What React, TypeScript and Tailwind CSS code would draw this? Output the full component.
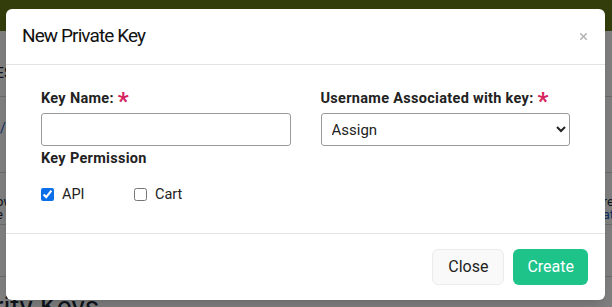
import { X } from "lucide-react";

function Req() {
  return <span className="ml-[4px] text-[24px] leading-none text-[#d6245e] relative top-[2px] font-bold">*</span>;
}

export default function App() {
  return (
    <div className="relative w-[612px] h-[307px] overflow-hidden bg-white font-['Roboto',sans-serif]">
      {/* page behind the modal */}
      <div className="h-[31px] bg-[#667816]" />
      <div className="flex flex-col text-[14px] leading-[14px] text-gray-800">
        <div className="h-[66px] border-b border-gray-300 pt-[35px]">
          <span className="-ml-[4px]">ES</span>
        </div>
        <div className="h-[76px] border-b border-gray-300 pt-[24px]">
          <span className="text-[#2060c0]">/</span>
        </div>
        <div className="h-[52px] border-b border-gray-300 pt-[22px] leading-[13px] text-[13px]">
          <div className="flex justify-between">
            <span className="-ml-[4px]">ow</span>
            <span className="-mr-[2px]">re</span>
          </div>
          <div className="flex justify-between">
            <span className="-ml-[4px]">e</span>
            <span className="text-[#2060c0] -mr-[2px]">at</span>
          </div>
        </div>
        <div className="h-[52px] border-b border-gray-300" />
        <div className="text-[28px] leading-none pt-[16px] -ml-[6px]">rity Keys</div>
      </div>
      <div className="absolute inset-0 bg-black/50" />

      {/* modal */}
      <div className="absolute left-[6px] top-[9px] w-[599px] h-[291px] bg-white rounded-[6px] shadow-lg flex flex-col">
        <div className="h-[56px] border-b border-[#e3e3e3] flex items-center justify-between pl-[16px] pr-[16px]">
          <h2 className="text-[19px] text-[#111] tracking-[-0.9px]">New Private Key</h2>
          <X className="w-[11px] h-[11px] text-[#b5b5b5]" strokeWidth={3.5} />
        </div>
        <div className="h-[169px] border-b border-[#e3e3e3] px-[35px] pt-[24px]">
          <div className="grid grid-cols-2 gap-x-[30px]">
            <div>
              <label className="flex items-center h-[20px] text-[14.5px] tracking-[0.3px] font-bold text-[#222]">
                Key Name:<Req />
              </label>
              <input className="mt-[4px] w-full h-[33px] border border-[#9a9a9a] rounded-[3px] px-2 text-[15px]" />
            </div>
            <div>
              <label className="flex items-center h-[20px] text-[14.5px] tracking-[0.3px] font-bold text-[#222]">
                Username Associated with key:<Req />
              </label>
              <select className="mt-[4px] w-full h-[33px] border border-[#9a9a9a] rounded-[3px] pl-[6px] pr-[8px] text-[15px] text-[#222] bg-white">
                <option>Assign</option>
              </select>
            </div>
          </div>
          <div className="mt-[2px] text-[14.5px] tracking-[0.3px] font-bold text-[#222]">Key Permission</div>
          <div className="mt-[14px] flex items-center text-[14.5px] text-[#222]">
            <label className="flex items-center gap-[8px] w-[93px]">
              <input type="checkbox" defaultChecked className="w-[13px] h-[13px] accent-[#0a6fe8]" />
              API
            </label>
            <label className="flex items-center gap-[8px]">
              <input type="checkbox" className="w-[13px] h-[13px]" />
              Cart
            </label>
          </div>
        </div>
        <div className="flex-1 flex items-center justify-end gap-[9px] pr-[17px]">
          <button className="h-[36px] px-[15px] rounded-[6px] border border-[#ececec] bg-[#f9f9f9] text-[16px] text-[#222]">
            Close
          </button>
          <button className="h-[36px] px-[14px] rounded-[6px] bg-[#1ec38a] text-[16px] text-white">
            Create
          </button>
        </div>
      </div>
    </div>
  );
}
